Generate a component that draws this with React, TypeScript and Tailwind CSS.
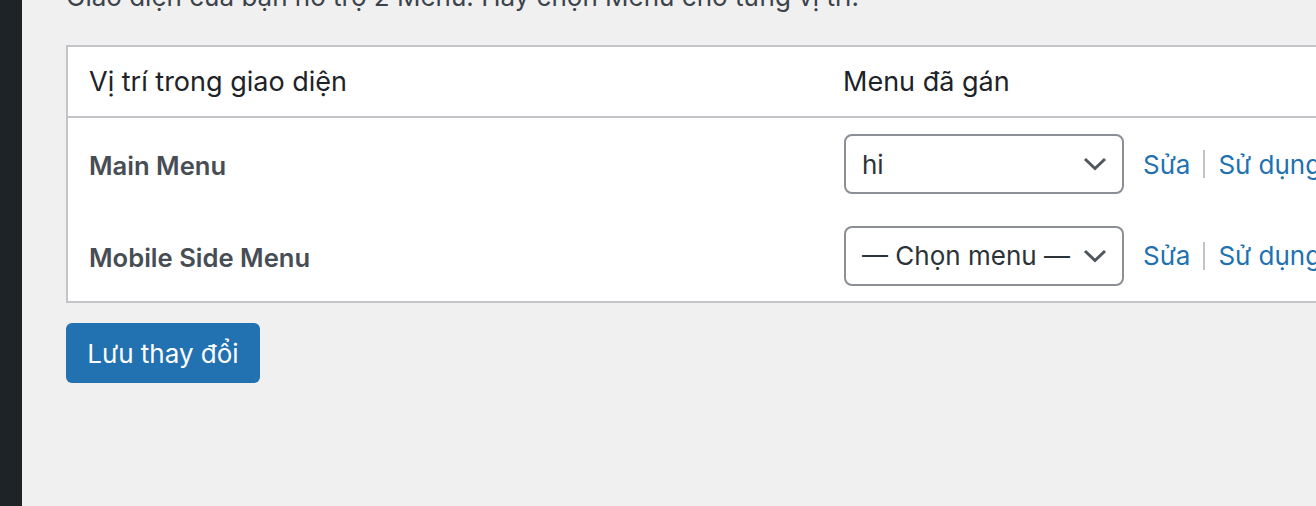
export default function App() {
  const rows = [
    { label: "Main Menu", value: "hi", h: "h-[92px]" },
    { label: "Mobile Side Menu", value: "— Chọn menu —", h: "h-[91px]" },
  ];

  return (
    <div className="flex h-[506px] w-[1316px] overflow-hidden bg-[#f0f0f1] font-['Inter',sans-serif]">
      <div className="w-[22px] shrink-0 bg-[#1d2327]" />
      <main className="flex-1 overflow-hidden pl-[44px]">
        <p className="mt-[-21px] mb-[30px] h-[36px] whitespace-nowrap text-[26px] leading-[36px] text-[#3c434a]">
          Giao diện của bạn hỗ trợ 2 Menu. Hãy chọn Menu cho từng vị trí.
        </p>

        <div className="w-[1400px] border-2 border-[#c3c4c7] bg-white">
          <div className="flex h-[71px] items-center border-b-2 border-[#c3c4c7] pt-[2px] text-[27px] text-[#1d2327]">
            <div className="w-[754px] px-[21px]">Vị trí trong giao diện</div>
            <div className="px-[21px]">Menu đã gán</div>
          </div>

          {rows.map((r) => (
            <div key={r.label} className={`flex items-center ${r.h}`}>
              <div className="w-[754px] px-[21px] pt-[5px] text-[25.6px] font-semibold text-[#474d54]">
                {r.label}
              </div>
              <div className="flex items-center pl-[22px]">
                <div className="flex h-[60px] w-[280px] items-center justify-between rounded-[8px] border-2 border-[#8c8f94] bg-white pl-[16px] pr-[15px] text-[26px] text-[#2c3338]">
                  <span className="whitespace-nowrap">{r.value}</span>
                  <svg width="24" height="14" viewBox="0 0 24 14" fill="none">
                    <path d="M2 2 L12 11.5 L22 2" stroke="#50575e" strokeWidth="3" />
                  </svg>
                </div>
                <div className="ml-[19px] flex items-center text-[26px] text-[#2271b1]">
                  <span>Sửa</span>
                  <span className="mx-[13px] h-[28px] w-[2px] bg-[#c3c4c7]" />
                  <span className="whitespace-nowrap">Sử dụng menu mới</span>
                </div>
              </div>
            </div>
          ))}
        </div>

        <button className="mt-[20px] flex h-[60px] w-[194px] items-center justify-center whitespace-nowrap rounded-[6px] bg-[#2271b1] text-[26px] text-white">
          Lưu thay đổi
        </button>
      </main>
    </div>
  );
}
